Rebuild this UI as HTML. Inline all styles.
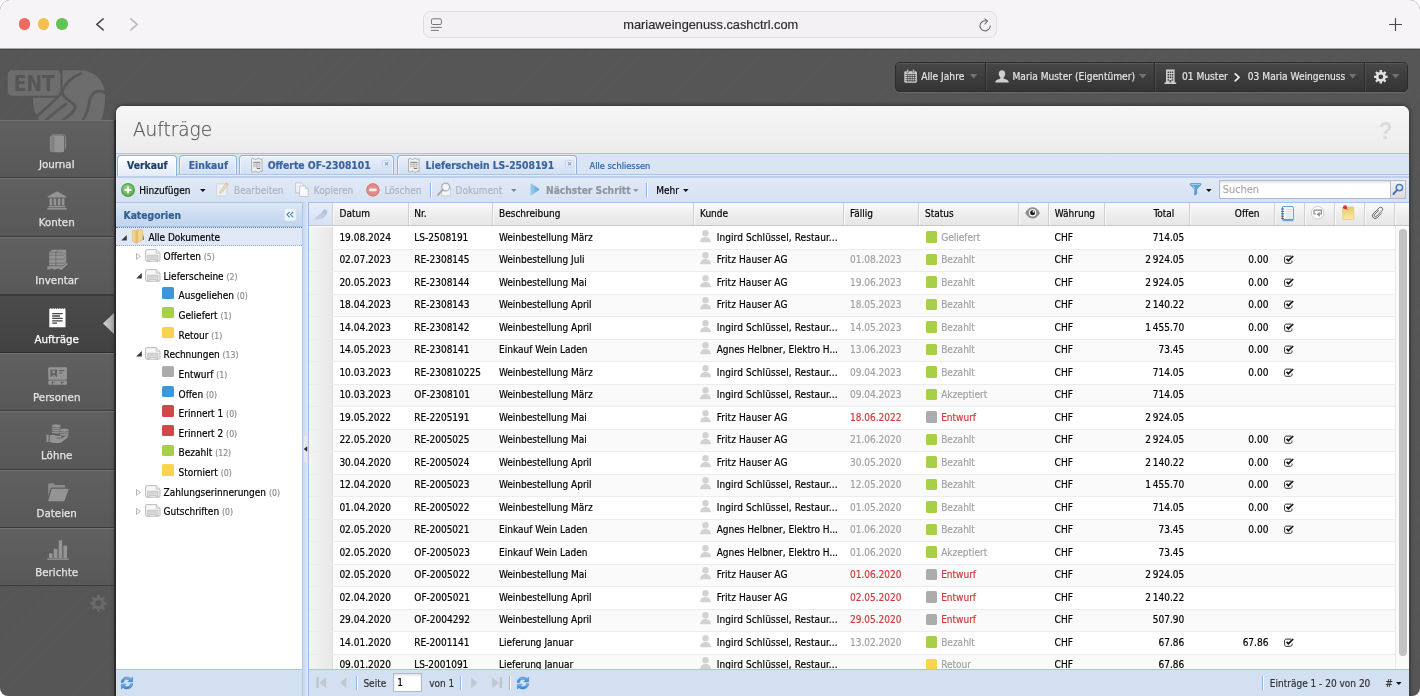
<!DOCTYPE html>
<html lang="de">
<head>
<meta charset="utf-8">
<title>Aufträge</title>
<style>
*{box-sizing:border-box;margin:0;padding:0}
html,body{width:1420px;height:696px;overflow:hidden;background:#fff}
body{font-family:"DejaVu Sans Condensed","Liberation Sans",sans-serif;font-size:10px;color:#000;position:relative;-webkit-text-stroke:0.18px}
.a{position:absolute;white-space:nowrap}
svg{position:absolute;overflow:visible}
#win{position:absolute;left:0;top:0;width:1420px;height:696px;border-radius:10px 10px 8px 8px;overflow:hidden;background:#f6f4f7;will-change:transform}
/* ---------- browser chrome ---------- */
#chrome{position:absolute;left:0;top:0;width:1420px;height:49px;background:#f6f4f7;border-bottom:1px solid #a9a7aa}
.tl{position:absolute;top:18.3px;width:11.4px;height:11.4px;border-radius:50%}
#url{position:absolute;left:422.5px;top:11px;width:574.6px;height:26.5px;border:1px solid #dfdde0;border-radius:7.5px;background:#f3f1f4}
#urltext{position:absolute;left:1px;width:100%;top:5px;text-align:center;font-family:"Liberation Sans",sans-serif;font-size:12.8px;color:#2c2c2e}
/* ---------- app background ---------- */
#app{position:absolute;left:0;top:0;width:1420px;height:696px;background:linear-gradient(#454545 50px,#565656 50px)}
#tex{position:absolute;left:0;top:0;width:1420px;height:696px;background:repeating-linear-gradient(135deg,rgba(255,255,255,.012) 0,rgba(255,255,255,.012) 1px,rgba(0,0,0,.016) 1px,rgba(0,0,0,.016) 3px)}
/* ---------- sidebar ---------- */
.sb{position:absolute;left:0;width:114.4px;height:58.25px;background:linear-gradient(#606060,#585858);border-top:1px solid #727272;border-bottom:1px solid #3c3c3c;color:#e4e4e4;-webkit-text-stroke:0.25px;text-align:center;font-family:"DejaVu Sans","Liberation Sans",sans-serif;font-size:10.3px}
.sb span{position:absolute;left:0;width:113.4px;top:36.9px}
.sb.act{background:linear-gradient(#4b4b4b,#424242);border-top-color:#3a3a3a;border-bottom-color:#2e2e2e;color:#fff}
/* ---------- top toolbar ---------- */
#tt{position:absolute;left:894.5px;top:62px;width:513.3px;height:30px;border-radius:5px;background:linear-gradient(#484848,#333);box-shadow:inset 0 0 0 1px #2d2d2d,inset 0 2px 0 rgba(255,255,255,.09),0 1px 0 rgba(255,255,255,.1)}
.tsep{position:absolute;top:63px;width:1px;height:28px;background:#2a2a2a;box-shadow:1px 0 0 rgba(255,255,255,.09)}
.tt{color:#e4e4e4;font-size:10.15px;top:71.1px}

/* ---------- main panel ---------- */
#panel{position:absolute;left:116px;top:106px;width:1293px;height:600px;border-radius:7px 7px 0 0;background:#fff;overflow:hidden;box-shadow:0 0 5px rgba(0,0,0,.6)}
#pin{position:absolute;left:-116px;top:-106px;width:1420px;height:696px}
#phead{position:absolute;left:116px;top:106px;width:1293px;height:47px;background:linear-gradient(#f6f6f6,#ececec)}
#ptitle{left:132.4px;top:116.9px;font-family:"DejaVu Sans","Liberation Sans",sans-serif;font-weight:200;font-size:20px;color:#555;transform-origin:0 0;transform:scaleX(0.922);-webkit-text-stroke:0.25px #666}
#help{left:1378.6px;top:117.5px;font-family:"Liberation Sans",sans-serif;font-weight:bold;font-size:23px;color:#dcdcdc;-webkit-text-stroke:0}
#tabbar{position:absolute;left:116px;top:153px;width:1293px;height:22px;background:#dae5f4;border-top:1px solid #a6c3ea}
#tabstrip{position:absolute;left:116px;top:174px;width:1293px;height:4px;background:#e4edf9;border-top:1px solid #a9c3ea;border-bottom:2px solid #bccfec}
.tab{position:absolute;top:155.3px;height:19px;box-shadow:inset 0 1px 0 rgba(255,255,255,.7),inset 1px 0 0 rgba(255,255,255,.5),inset -1px 0 0 rgba(255,255,255,.5);border:1px solid #8fb1e0;border-bottom:0;border-radius:4px 4px 0 0;background:linear-gradient(#e9f0fa,#d2e0f3);color:#3c639d;font-weight:bold;font-size:10.3px;white-space:nowrap}
.tab.act{background:linear-gradient(#fff,#e2ebf8);color:#1c3d66;height:20.3px}
.tab span{position:absolute;top:2.8px}
#tbar{position:absolute;left:116px;top:178px;width:1293px;height:24.5px;background:linear-gradient(#e1e9f6,#d5e1f1)}
.tb{top:185.2px;font-size:10px}
.dis{color:#adb4c0}
.vsep{position:absolute;width:1px;height:14px;background:#8fb4ea;box-shadow:1px 0 0 #fff}

.fld{position:absolute;border:1px solid #b4b9c9;background:#fff;box-shadow:inset 0 1.5px 2px rgba(0,0,0,.13)}
/* ---------- tree ---------- */
#treehd{position:absolute;left:116px;top:202px;width:186px;height:24.8px;background:linear-gradient(#dfe9f6,#cbdcf1 55%,#c0d4ed);border-top:1px solid #a6c3ea;border-bottom:1px solid #a6c3ea}
#treehd b{position:absolute;left:7.5px;top:5.8px;color:#2e5d97;font-size:10.25px}
.tr{position:absolute;left:116px;width:186px;height:19.65px;white-space:nowrap;font-size:10px}
.tr .lbl{position:absolute;top:4.5px}
.cnt{color:#8e8e8e;font-size:8.7px}
.sq{position:absolute;width:11.4px;height:11.4px;border-radius:1.5px}
.c-blue{background:#3e97db}.c-green{background:#a8cf48}.c-yellow{background:#f9d44f}.c-gray{background:#acacac}.c-red{background:#d04848}
#split{position:absolute;left:302px;top:202px;width:7px;height:500px;background:linear-gradient(90deg,#c6d7f0,#dfe8f6);border-left:1px solid #b3c9ea;border-right:1px solid #9dbbe6}
.foot{position:absolute;top:669px;height:30px;background:#d3e0f1;border-top:1px solid #a6c3ea}
/* ---------- grid ---------- */
#ghd{position:absolute;left:309px;top:202px;width:1100px;height:24px;background:linear-gradient(#fafafa,#ececec 60%,#e6e6e7);border-top:1px solid #a6c3ea;border-bottom:1px solid #c6c6c6}
.hc{position:absolute;top:203px;height:22px;width:2px;border-left:1px solid #cfcfcf;border-right:1px solid #fcfcfc}
.ht{top:208.3px;font-size:10px}
#rows{position:absolute;left:309px;top:226px;width:1086px;height:443px;overflow:hidden;background:#fff}
.row{position:absolute;left:0;width:1086px;height:22.5px;border-bottom:1px solid #ececec;background:#fff;white-space:nowrap;font-size:10px}
.row.alt{background:#fafafa}
.row .c{position:absolute;top:4.7px}
.row .num{position:absolute;left:0;top:0;width:24px;height:21.5px;background:linear-gradient(90deg,#f4f4f4,#e8e8e8);border-right:1px solid #dedede}
.row .r{text-align:right}
.grey{color:#a2a2a2}.red{color:#ce3b3b}
.ft{top:677.8px;font-size:10px;color:#333}
#vsb{position:absolute;left:1395px;top:226px;width:14px;height:443px;background:#fafafa;border-left:1px solid #e9e9e9}
#vsb i{position:absolute;left:3.4px;top:3.2px;width:7.2px;height:427px;border-radius:3.7px;background:#c2c2c2}
</style>
</head>
<body>
<div id="win">
<div id="app"><div id="tex"></div>
<svg style="left:0;top:0" width="120" height="119.6" viewBox="0 0 120 119.6"><g><rect x="7.8" y="70.2" width="52.6" height="25.6" rx="4.5" fill="#6d6d6d"/><text x="34.3" y="90.9" text-anchor="middle" font-family="DejaVu Sans,Liberation Sans,sans-serif" font-weight="bold" font-size="21" fill="#565656" textLength="41" lengthAdjust="spacingAndGlyphs">ENT</text><path d="M62.5 70.2 H79 C92 70.5 101 76 104.6 90 C105.5 98 105 110 101 121 H40 C35 115 32.6 106 33 97.8 H56 C60.5 97.8 62.5 95 62.5 91 Z" fill="#6d6d6d"/><path d="M81 73.5 C72 77 65 84 62 92 C58 98 46 108 34 119" fill="none" stroke="#585858" stroke-width="2.8" stroke-linecap="round"/><path d="M62 92 C64 100 72 101 75 106 C77 111 68 116 63 120" fill="none" stroke="#585858" stroke-width="2.8" stroke-linecap="round"/><path d="M66 104 C58 110 52 115 46 120" fill="none" stroke="#585858" stroke-width="2.8" stroke-linecap="round"/><path d="M104.5 92.5 C97 89 91 93 89.5 101 C88.5 108 87 114 83 120" fill="none" stroke="#585858" stroke-width="2.8" stroke-linecap="round"/></g></svg>
<div class="sb" style="top:120.00px"><svg style="left:48.5px;top:13.2px" width="18" height="19" viewBox="0 0 18 19" ><path d="M3 0.8 H14.6 C15.8 0.8 16.6 1.6 16.6 2.8 V14.6" fill="none" stroke="#949494" stroke-width="1" opacity=".8"/><rect x="1.2" y="1.6" width="14" height="16.6" rx="1.6" fill="#949494"/><rect x="2" y="2.4" width="3.6" height="15.8" fill="#545454" opacity=".28"/><path d="M0.6 4.2h1.2M0.6 6.7h1.2M0.6 9.2h1.2M0.6 11.7h1.2M0.6 14.2h1.2" stroke="#949494" stroke-width="0.9"/></svg><span>Journal</span></div>
<div class="sb" style="top:178.25px"><svg style="left:47.4px;top:11.6px" width="20" height="19" viewBox="0 0 20 19" ><path d="M10 0.2 L19.3 5.6 V6.6 H0.7 V5.6 Z" fill="#949494"/><path d="M2.6 7.6h2.6v6.6h-2.6zM6.6 7.6h2.6v6.6h-2.6zM10.8 7.6h2.6v6.6h-2.6zM14.8 7.6h2.6v6.6h-2.6z" fill="#949494"/><rect x="1.6" y="14.8" width="16.8" height="1.4" fill="#949494"/><rect x="0.3" y="16.8" width="19.4" height="1.8" fill="#949494"/></svg><span>Konten</span></div>
<div class="sb" style="top:236.50px"><svg style="left:46.6px;top:11.3px" width="21" height="21" viewBox="0 0 21 21" ><path d="M2.2 3.2 L5.2 0.8 H19.2 V13.6 L16.2 16.6 H2.2 Z" fill="#949494"/><path d="M2.2 3.3H16.2M2.2 6.1H16.2L19.2 3.6M2.2 10.2H16.2L19.2 7.7M2.2 14.3H16.2L19.2 11.8M8.8 3.2V16.6M8.8 3.2L11.6 0.9" stroke="#545454" stroke-width="0.6" fill="none" opacity=".75"/><path d="M0.4 17.3 H15.8 L20.4 13.2 V15.6 L15.8 19.8 V20.6 H12.8 L12 19.7 H9.6 L8.8 20.6 H6.6 L5.8 19.7 H3.4 L2.6 20.6 H0.4 Z" fill="#949494"/></svg><span>Inventar</span></div>
<div class="sb act" style="top:294.75px"><svg style="left:49px;top:11.0px" width="17" height="21" viewBox="0 0 17 21" ><path d="M0.3 2.2 L1.2 0.9 L2.1 2.2 L3 0.9 L3.9 2.2 L4.8 0.9 L5.7 2.2 L6.6 0.9 L7.5 2.2 L8.4 0.9 L9.3 2.2 L10.2 0.9 L11.1 2.2 L12 0.9 L12.9 2.2 L13.8 0.9 L14.7 2.2 L15.6 0.9 L16.5 2.2 V20.3 H0.3 Z" fill="#fff"/><path d="M3.2 6.6H13.6M3.2 9H11M3.2 11.4H13.6M3.2 13.8H13.6M3.2 16.2H8" stroke="#454545" stroke-width="1.3" fill="none"/></svg><span>Aufträge</span></div>
<div class="sb" style="top:353.00px"><svg style="left:47.9px;top:12.5px" width="19.2" height="18" viewBox="0 0 19.2 18" ><rect x="0.3" y="0.3" width="18.6" height="12.4" rx="1" fill="#949494"/><rect x="2.4" y="2.6" width="6.6" height="7.2" fill="#545454" opacity=".8"/><circle cx="5.7" cy="5" r="1.4" fill="#949494"/><path d="M3.3 9.8C3.3 7.6 8.1 7.6 8.1 9.8Z" fill="#949494"/><path d="M10.8 3.6H16.4M10.8 6H14.6" stroke="#545454" stroke-width="1.1" opacity=".8"/><rect x="0.3" y="13.6" width="18.6" height="4.2" rx="0.8" fill="#949494"/><path d="M3.4 15.2h3.4M12.4 15.2h3.4" stroke="#545454" stroke-width="1.1" opacity=".8"/><path d="M4.4 15.4v2M13.6 15.4v2" stroke="#545454" stroke-width="1" opacity=".8"/></svg><span>Personen</span></div>
<div class="sb" style="top:411.25px"><svg style="left:45.8px;top:11.6px" width="24" height="20" viewBox="0 0 24 20" ><ellipse cx="10.3" cy="8.3" rx="4.7" ry="1.6" fill="#949494" stroke="#545454" stroke-width="0.45"/><ellipse cx="10.3" cy="6.2" rx="4.7" ry="1.6" fill="#949494" stroke="#545454" stroke-width="0.45"/><ellipse cx="10.3" cy="4.1" rx="4.7" ry="1.6" fill="#949494" stroke="#545454" stroke-width="0.45"/><ellipse cx="10.3" cy="2.0" rx="4.7" ry="1.9" fill="#949494" stroke="#545454" stroke-width="0.45"/><ellipse cx="18.3" cy="10.4" rx="4.6" ry="1.6" fill="#949494" stroke="#545454" stroke-width="0.45"/><ellipse cx="18.3" cy="8.3" rx="4.6" ry="1.6" fill="#949494" stroke="#545454" stroke-width="0.45"/><ellipse cx="18.3" cy="6.2" rx="4.6" ry="1.9" fill="#949494" stroke="#545454" stroke-width="0.45"/><rect x="0.4" y="10.6" width="2.2" height="7.4" fill="#949494"/><path d="M3.6 11.4 C6 10.4 8 10.6 10 11.8 H14.6 C16 11.8 16 13.8 14.6 13.8 H10.4 L10.4 14.4 H15.4 L20.2 11.6 C21.8 10.8 22.8 12.4 21.6 13.4 L15.6 18.2 C14.8 18.8 14 19 13 19 H7.4 C6 19 5.2 18.2 3.6 18 Z" fill="#949494"/></svg><span>Löhne</span></div>
<div class="sb" style="top:469.50px"><svg style="left:47px;top:12.4px" width="22" height="19" viewBox="0 0 22 19" ><path d="M1.2 1.2 C1.2 0.6 1.6 0.3 2.2 0.3 H6.4 L8 2 H17 C17.8 2 18.2 2.4 18.2 3.2 V4.6 H5.4 C4.4 4.6 3.8 5 3.4 6 L1.2 13 Z" fill="#949494" opacity=".85"/><path d="M5.6 5.8 H20.6 C21.4 5.8 21.7 6.3 21.4 7 L17.8 17 C17.5 17.8 17 18.2 16.2 18.2 H1 L4.4 7 C4.7 6.2 5 5.8 5.6 5.8 Z" fill="#949494"/></svg><span>Dateien</span></div>
<div class="sb" style="top:527.75px"><svg style="left:46.6px;top:11.1px" width="22" height="20" viewBox="0 0 22 20" ><rect x="2" y="13.4" width="3.6" height="4.6" fill="#949494"/><rect x="6.8" y="8.8" width="3.6" height="9.2" fill="#949494"/><rect x="11.6" y="0.4" width="3.6" height="17.6" fill="#949494"/><rect x="16.4" y="5.6" width="3.6" height="12.4" fill="#949494"/><rect x="0.2" y="18.4" width="21.4" height="1.4" fill="#949494"/></svg><span>Berichte</span></div>
<div class="a" style="left:114.4px;top:120.0px;width:1.6px;height:600px;background:#383838"></div><svg style="left:103.4px;top:312.7px" width="11" height="21" viewBox="0 0 11 21" ><defs><linearGradient id="sag" x1="0" x2="1"><stop offset="0" stop-color="#d4d4d4"/><stop offset="1" stop-color="#a9a9a9"/></linearGradient></defs><path d="M11 0 L0 10.5 L11 21 Z" fill="url(#sag)"/></svg><svg style="left:89.6px;top:595.4px" width="17" height="17" viewBox="0 0 17 17" ><path d="M16.58 6.87 L16.58 9.73 L14.33 9.72 L13.60 11.49 L15.19 13.07 L13.17 15.09 L11.59 13.50 L9.82 14.23 L9.83 16.48 L6.97 16.48 L6.98 14.23 L5.21 13.50 L3.63 15.09 L1.61 13.07 L3.20 11.49 L2.47 9.72 L0.22 9.73 L0.22 6.87 L2.47 6.88 L3.20 5.11 L1.61 3.53 L3.63 1.51 L5.21 3.10 L6.98 2.37 L6.97 0.12 L9.83 0.12 L9.82 2.37 L11.59 3.10 L13.17 1.51 L15.19 3.53 L13.60 5.11 L14.33 6.88 Z M11.40 8.30 A3.0 3.0 0 1 0 5.40 8.30 A3.0 3.0 0 1 0 11.40 8.30 Z" fill="#696969" fill-rule="evenodd"/></svg>
<div id="tt"></div><svg style="left:904.2px;top:69.3px" width="13.2" height="14" viewBox="0 0 13.2 14" ><rect x="0.3" y="2.2" width="12.6" height="11.6" rx="1.2" fill="#cfcfcf"/><rect x="2.8" y="0.3" width="1.7" height="3.4" rx="0.6" fill="#cfcfcf" stroke="#3e3e3e" stroke-width="0.5"/><rect x="8.7" y="0.3" width="1.7" height="3.4" rx="0.6" fill="#cfcfcf" stroke="#3e3e3e" stroke-width="0.5"/><path d="M1.4 5.4H11.8M1.4 7.5H11.8M1.4 9.6H11.8M1.4 11.7H11.8M3.7 5.4V13M6 5.4V13M8.3 5.4V13M10.6 5.4V13" stroke="#3e3e3e" stroke-width="0.7" fill="none"/></svg><div class="a tt" style="left:921.3px;">Alle Jahre</div><svg style="left:969.7px;top:74.2px" width="7.4" height="4.6" viewBox="0 0 7.4 4.6"><path d="M0 0H7.4L3.7 4.6Z" fill="#737373"/></svg><div class="tsep" style="left:984.7px"></div><svg style="left:995px;top:70.2px" width="14" height="12.6" viewBox="0 0 14 12.6" ><path d="M7 0.3 C9.2 0.3 10.2 2 10.2 3.8 C10.2 5.6 9.4 6.8 8.6 7.4 C8.4 8.4 9.2 8.8 10.6 9.3 C12.6 10 13.6 10.6 13.8 12.4 H0.2 C0.4 10.6 1.4 10 3.4 9.3 C4.8 8.8 5.6 8.4 5.4 7.4 C4.6 6.8 3.8 5.6 3.8 3.8 C3.8 2 4.8 0.3 7 0.3 Z" fill="#cfcfcf"/></svg><div class="a tt" style="left:1012.5px;">Maria Muster (Eigentümer)</div><svg style="left:1138.7px;top:74.2px" width="7.4" height="4.6" viewBox="0 0 7.4 4.6"><path d="M0 0H7.4L3.7 4.6Z" fill="#737373"/></svg><div class="tsep" style="left:1153.8px"></div><svg style="left:1164.2px;top:69px" width="12.6" height="15.2" viewBox="0 0 12.6 15.2" ><path d="M2 0.4 H10.6 V13.4 H12.2 V15 H0.4 V13.4 H2 Z" fill="#cfcfcf"/><path d="M3.6 2.4h1.4v1.6h-1.4zM5.7 2.4h1.4v1.6h-1.4zM7.8 2.4h1.4v1.6h-1.4zM3.6 5h1.4v1.6h-1.4zM5.7 5h1.4v1.6h-1.4zM7.8 5h1.4v1.6h-1.4zM3.6 7.6h1.4v1.6h-1.4zM5.7 7.6h1.4v1.6h-1.4zM7.8 7.6h1.4v1.6h-1.4zM3.6 10.2h1.4v1.6h-1.4zM7.8 10.2h1.4v1.6h-1.4zM5.6 11h1.6v2.4h-1.6z" fill="#3e3e3e"/></svg><div class="a tt" style="left:1182px;">01 Muster</div><svg style="left:1234px;top:72.6px" width="7" height="9" viewBox="0 0 7 9" ><path d="M1.2 0.9 L5 4.4 L1.2 7.9" fill="none" stroke="#f0f0f0" stroke-width="1.7" stroke-linecap="round" stroke-linejoin="round"/></svg><div class="a tt" style="left:1247.8px;">03 Maria Weingenuss</div><svg style="left:1348.7px;top:74.2px" width="7.4" height="4.6" viewBox="0 0 7.4 4.6"><path d="M0 0H7.4L3.7 4.6Z" fill="#737373"/></svg><div class="tsep" style="left:1364px"></div><svg style="left:1374.2px;top:69.8px" width="14" height="14" viewBox="0 0 14 14" ><path d="M13.60 5.61 L13.60 7.99 L11.66 7.97 L11.06 9.41 L12.45 10.77 L10.77 12.45 L9.41 11.06 L7.97 11.66 L7.99 13.60 L5.61 13.60 L5.63 11.66 L4.19 11.06 L2.83 12.45 L1.15 10.77 L2.54 9.41 L1.94 7.97 L0.00 7.99 L0.00 5.61 L1.94 5.63 L2.54 4.19 L1.15 2.83 L2.83 1.15 L4.19 2.54 L5.63 1.94 L5.61 0.00 L7.99 0.00 L7.97 1.94 L9.41 2.54 L10.77 1.15 L12.45 2.83 L11.06 4.19 L11.66 5.63 Z M9.20 6.80 A2.4 2.4 0 1 0 4.40 6.80 A2.4 2.4 0 1 0 9.20 6.80 Z" fill="#e2e2e2" fill-rule="evenodd"/></svg><svg style="left:1391.7px;top:74.2px" width="7.4" height="4.6" viewBox="0 0 7.4 4.6"><path d="M0 0H7.4L3.7 4.6Z" fill="#737373"/></svg>
<div id="panel"><div id="pin">
<div id="phead"></div><div class="a" id="ptitle" style="left:133px;">Aufträge</div><div class="a" id="help" style="left:1378.5px;">?</div>
<div id="tabbar"></div><div id="tabstrip"></div>
<div class="tab act" style="left:117.2px;width:59.6px"><span style="left:8.9px">Verkauf</span></div><div class="tab" style="left:179.2px;width:57.6px"><span style="left:8.6px">Einkauf</span></div><div class="tab" style="left:239.4px;width:155.0px"><span style="left:27.3px">Offerte OF-2308101</span></div><svg style="left:250.6px;top:158.2px" width="11.6" height="14.7" viewBox="0 0 11.6 14.7" ><path d="M0.5 1 Q1.8 -0.3 3.1 1 Q4.4 2 5.8 1 Q7.1 -0.3 8.5 1 Q9.8 2 11.1 0.8 V13.7 Q9.8 12.5 8.5 13.7 Q7.1 14.9 5.8 13.7 Q4.4 12.5 3.1 13.7 Q1.8 14.9 0.5 13.7 Z" fill="#eeeeee" stroke="#a5a5a5" stroke-width="0.8"/><path d="M2.6 4.4H9.2" stroke="#6d6d6d" stroke-width="0.9"/><path d="M2.8 4.4V9.4M5.9 4.4V10.6M9 4.4V9.4M2.8 6.4H9M2.8 8.2H9" stroke="#9a9a9a" stroke-width="0.55" fill="none"/><path d="M6 10.4H9.2" stroke="#6a6a6a" stroke-width="1"/></svg><svg style="left:381.8px;top:159.5px" width="9.2" height="7.6" viewBox="0 0 9.2 7.6" ><rect x="0.4" y="0.4" width="8.4" height="6.8" rx="1.2" fill="#e7eefa" stroke="#b9cdea" stroke-width="0.7"/><path d="M2.9 2.2L6.3 5.4M6.3 2.2L2.9 5.4" stroke="#8aa6cf" stroke-width="1.2"/></svg><div class="tab" style="left:397.3px;width:179.5px"><span style="left:27.3px">Lieferschein LS-2508191</span></div><svg style="left:408.1px;top:158.2px" width="11.6" height="14.7" viewBox="0 0 11.6 14.7" ><path d="M0.5 1 Q1.8 -0.3 3.1 1 Q4.4 2 5.8 1 Q7.1 -0.3 8.5 1 Q9.8 2 11.1 0.8 V13.7 Q9.8 12.5 8.5 13.7 Q7.1 14.9 5.8 13.7 Q4.4 12.5 3.1 13.7 Q1.8 14.9 0.5 13.7 Z" fill="#eeeeee" stroke="#a5a5a5" stroke-width="0.8"/><path d="M2.6 4.4H9.2" stroke="#6d6d6d" stroke-width="0.9"/><path d="M2.8 4.4V9.4M5.9 4.4V10.6M9 4.4V9.4M2.8 6.4H9M2.8 8.2H9" stroke="#9a9a9a" stroke-width="0.55" fill="none"/><path d="M6 10.4H9.2" stroke="#6a6a6a" stroke-width="1"/></svg><svg style="left:564.7px;top:159.5px" width="9.2" height="7.6" viewBox="0 0 9.2 7.6" ><rect x="0.4" y="0.4" width="8.4" height="6.8" rx="1.2" fill="#e7eefa" stroke="#b9cdea" stroke-width="0.7"/><path d="M2.9 2.2L6.3 5.4M6.3 2.2L2.9 5.4" stroke="#8aa6cf" stroke-width="1.2"/></svg><div class="a" style="left:589.6px;top:160.3px;font-size:9.2px;color:#2e5d9f">Alle schliessen</div>
<div id="tbar"></div><svg style="left:120.8px;top:182.7px" width="14" height="14" viewBox="0 0 14 14" ><defs><radialGradient id="ga" cx=".4" cy=".3" r=".8"><stop offset="0" stop-color="#93d485"/><stop offset="1" stop-color="#52a847"/></radialGradient></defs><circle cx="7" cy="7" r="6.4" fill="url(#ga)" stroke="#52a048" stroke-width="1.1"/><path d="M7 3.6V10.4M3.6 7H10.4" stroke="#fff" stroke-width="1.8"/></svg><div class="a tb" style="left:139.3px;">Hinzufügen</div><svg style="left:199.9px;top:188.6px" width="5.6" height="3.1" viewBox="0 0 5.6 3.1"><path d="M0 0H5.6L2.8 3.1Z" fill="#111"/></svg><svg style="left:216.2px;top:182.3px" width="13" height="15" viewBox="0 0 13 15" opacity=".8"><rect x="0.6" y="2" width="10.2" height="12" rx="0.8" fill="#f4f5f7" stroke="#c3c8d0" stroke-width="0.8"/><path d="M10.4 0.6 L12.4 2.4 L6 10.4 L3.6 11.4 L4.2 8.8 Z" fill="#ecd9ad" stroke="#c9b78e" stroke-width="0.6"/><path d="M10.4 0.6 L12.4 2.4 L11.4 3.6 L9.4 1.8Z" fill="#e4b0a8"/></svg><div class="a tb dis" style="left:234px;">Bearbeiten</div><svg style="left:295.2px;top:182.4px" width="14" height="15" viewBox="0 0 14 15" ><path d="M0.6 0.8 H6.4 L8.8 3.2 V10.8 H0.6 Z" fill="#f2f3f5" stroke="#b9bec7" stroke-width="0.8"/><path d="M4.6 3.8 H10.4 L13.2 6.6 V14.4 H4.6 Z" fill="#fafafb" stroke="#b9bec7" stroke-width="0.8"/><path d="M10.4 3.8V6.6H13.2" fill="none" stroke="#b9bec7" stroke-width="0.7"/></svg><div class="a tb dis" style="left:313.8px;">Kopieren</div><svg style="left:366px;top:182.8px" width="14" height="14" viewBox="0 0 14 14" ><circle cx="6.9" cy="6.9" r="6.6" fill="#e58a8a"/><circle cx="6.9" cy="6.9" r="6.1" fill="none" stroke="#dc7575" stroke-width="0.9"/><rect x="3.2" y="5.6" width="7.4" height="2.6" rx="0.6" fill="#fbeeee"/></svg><div class="a tb dis" style="left:384.5px;">Löschen</div><div class="vsep" style="left:430px;top:183px"></div><svg style="left:436.8px;top:182.2px" width="14" height="15" viewBox="0 0 14 15" ><path d="M4.6 2.6 H11 L13.4 5 V13.8 H4.6 Z" fill="#f4f5f7" stroke="#c3c8d0" stroke-width="0.8"/><circle cx="8.6" cy="5" r="3.9" fill="#f3f6fa" fill-opacity=".8" stroke="#a9aeb6" stroke-width="1.1"/><path d="M5.8 7.8 L1 12.8" stroke="#a3a8b0" stroke-width="1.9" stroke-linecap="round"/></svg><div class="a tb dis" style="left:455.6px;">Dokument</div><svg style="left:511.4px;top:188.6px" width="5.6" height="3.1" viewBox="0 0 5.6 3.1"><path d="M0 0H5.6L2.8 3.1Z" fill="#7d8794"/></svg><svg style="left:530.3px;top:183px" width="9.2" height="12.9" viewBox="0 0 9.2 12.9" ><defs><linearGradient id="gn" x1="0" x2="1"><stop offset="0" stop-color="#9fd0f0"/><stop offset="1" stop-color="#5aa7dd"/></linearGradient></defs><path d="M1.4 0.5 C0.8 0.2 0.4 0.5 0.4 1.1 V11.7 C0.4 12.3 0.8 12.6 1.4 12.3 L8.6 7.3 C9.1 6.9 9.1 6 8.6 5.6 Z" fill="url(#gn)"/></svg><div class="a tb" style="left:546px;font-weight:bold;color:#8f949c;top:185.2px;font-size:10.2px">Nächster Schritt</div><svg style="left:633.4px;top:188.8px" width="5.6" height="3.1" viewBox="0 0 5.6 3.1"><path d="M0 0H5.6L2.8 3.1Z" fill="#8f949c"/></svg><div class="vsep" style="left:646px;top:183px"></div><div class="a tb" style="left:656.2px;">Mehr</div><svg style="left:683.2px;top:188.6px" width="5.6" height="3.1" viewBox="0 0 5.6 3.1"><path d="M0 0H5.6L2.8 3.1Z" fill="#111"/></svg><svg style="left:1189.6px;top:183.2px" width="11.8" height="12.6" viewBox="0 0 11.8 12.6" ><path d="M0.4 0.6 H10.8 V1.9 L6.7 6.2 V11 L4.7 12.2 V6.2 L0.4 1.9 Z" fill="#5aa5de" stroke="#3f86c4" stroke-width="0.6" stroke-linejoin="round"/><path d="M1.2 1.5H10" stroke="#b4d9f4" stroke-width="0.8"/><path d="M2.6 2.8L4.9 5.2" stroke="#cfe6f8" stroke-width="0.8"/></svg><svg style="left:1206.4px;top:188.6px" width="5.6" height="3.1" viewBox="0 0 5.6 3.1"><path d="M0 0H5.6L2.8 3.1Z" fill="#111"/></svg><div class="fld" style="left:1219.3px;top:180px;width:187.2px;height:19px"></div><div class="a" style="left:1222.8px;top:182.7px;font-size:10.9px;color:#a9a9a9">Suchen</div><div class="a" style="left:1390px;top:181px;width:15px;height:17px;background:linear-gradient(#f3f3f4,#dcdcde);border-left:1px solid #b9bccb"></div><svg style="left:1392.2px;top:183.3px" width="12" height="12" viewBox="0 0 12 12" ><circle cx="7.4" cy="4.6" r="3.2" fill="#e4e6ea" stroke="#4a7fc4" stroke-width="1.5"/><path d="M5 7.2 L1.4 11" stroke="#3f70b8" stroke-width="1.9" stroke-linecap="round"/></svg>
<div id="treehd"><b>Kategorien</b></div><svg style="left:283.7px;top:208px" width="12.4" height="13.2" viewBox="0 0 12.4 13.2" ><rect x="0.3" y="0.3" width="11.8" height="12.6" rx="2" fill="#f0f5fc" stroke="#cad9ef" stroke-width="0.6"/><path d="M5.6 3.9 L3 6.6 L5.6 9.3 M9.2 3.9 L6.6 6.6 L9.2 9.3" fill="none" stroke="#4c86c6" stroke-width="1.2"/></svg>
<div class="tr" style="top:226.80px;background:#e0e8f6;border-top:1px dotted #6a7488;border-bottom:1px dotted #8fa9d8"><svg style="left:5.3px;top:7.3px" width="6" height="5.6" viewBox="0 0 6 5.6" ><path d="M5.8 0 V5.4 H0.2 Z" fill="#3a3a3a"/></svg><svg style="left:16.2px;top:1.6px" width="12.4" height="14.8" viewBox="0 0 12.4 14.8" ><defs><linearGradient id="gf" x1="0" x2="1"><stop offset="0" stop-color="#f6dc9c"/><stop offset="1" stop-color="#e4b869"/></linearGradient></defs><rect x="10.2" y="6.2" width="1.8" height="2" fill="#f0a23c"/><rect x="10.2" y="8" width="1.8" height="3" fill="#3d93df"/><path d="M4.6 0.7 L9.6 0.4 C10.2 0.4 10.6 0.8 10.6 1.4 V11.2 L6 13 Z" fill="#f2d48f" stroke="#ddb469" stroke-width="0.5"/><path d="M0.5 1.8 C0.5 1.2 0.9 0.9 1.4 1 L5.4 2.4 V14.4 L1.2 12.8 C0.7 12.6 0.5 12.3 0.5 11.8 Z" fill="url(#gf)" stroke="#d7aa5c" stroke-width="0.5"/></svg><div class="lbl" style="left:32.4px">Alle Dokumente</div></div>
<div class="tr" style="top:246.45px"><svg style="left:20px;top:6.5px" width="5" height="6.8" viewBox="0 0 5 6.8" ><path d="M0.5 0.5 L4.4 3.4 L0.5 6.3 Z" fill="#fff" stroke="#a3a3a3" stroke-width="0.8"/></svg><svg style="left:29.4px;top:2.6px" width="15.6" height="12.8" viewBox="0 0 15.6 12.8" ><path d="M2 0.6 H11.2 L15 4.2 V11 C15 11.8 14.6 12.2 13.8 12.2 H2 C1.2 12.2 0.6 11.8 0.6 11 V2 C0.6 1.2 1.2 0.6 2 0.6 Z" fill="#f7f7f7" stroke="#b3b3b3" stroke-width="0.9"/><path d="M11.2 0.6 V4.2 H15" fill="#e9e9e9" stroke="#b9b9b9" stroke-width="0.7"/><path d="M2.6 6.2 H13 V12 H11 V10.4 H4.6 V12 H2.6 Z" fill="#dcdcdc" stroke="#b7b7b7" stroke-width="0.7"/><path d="M4 8 H11.6" stroke="#c9c9c9" stroke-width="0.8"/></svg><div class="lbl" style="left:47.6px">Offerten <span class="cnt">(5)</span></div></div>
<div class="tr" style="top:266.10px"><svg style="left:20.1px;top:6.6px" width="6" height="5.6" viewBox="0 0 6 5.6" ><path d="M5.8 0 V5.4 H0.2 Z" fill="#3a3a3a"/></svg><svg style="left:29.4px;top:2.6px" width="15.6" height="12.8" viewBox="0 0 15.6 12.8" ><path d="M2 0.6 H11.2 L15 4.2 V11 C15 11.8 14.6 12.2 13.8 12.2 H2 C1.2 12.2 0.6 11.8 0.6 11 V2 C0.6 1.2 1.2 0.6 2 0.6 Z" fill="#f7f7f7" stroke="#b3b3b3" stroke-width="0.9"/><path d="M11.2 0.6 V4.2 H15" fill="#e9e9e9" stroke="#b9b9b9" stroke-width="0.7"/><path d="M2.6 6.2 H13 V12 H11 V10.4 H4.6 V12 H2.6 Z" fill="#dcdcdc" stroke="#b7b7b7" stroke-width="0.7"/><path d="M4 8 H11.6" stroke="#c9c9c9" stroke-width="0.8"/></svg><div class="lbl" style="left:47.6px">Lieferscheine <span class="cnt">(2)</span></div></div>
<div class="tr" style="top:285.75px"><div class="sq c-blue" style="left:46.4px;top:1.6px"></div><div class="lbl" style="left:62.6px">Ausgeliehen <span class="cnt">(0)</span></div></div>
<div class="tr" style="top:305.40px"><div class="sq c-green" style="left:46.4px;top:1.6px"></div><div class="lbl" style="left:62.6px">Geliefert <span class="cnt">(1)</span></div></div>
<div class="tr" style="top:325.05px"><div class="sq c-yellow" style="left:46.4px;top:1.6px"></div><div class="lbl" style="left:62.6px">Retour <span class="cnt">(1)</span></div></div>
<div class="tr" style="top:344.70px"><svg style="left:20.1px;top:6.6px" width="6" height="5.6" viewBox="0 0 6 5.6" ><path d="M5.8 0 V5.4 H0.2 Z" fill="#3a3a3a"/></svg><svg style="left:29.4px;top:2.6px" width="15.6" height="12.8" viewBox="0 0 15.6 12.8" ><path d="M2 0.6 H11.2 L15 4.2 V11 C15 11.8 14.6 12.2 13.8 12.2 H2 C1.2 12.2 0.6 11.8 0.6 11 V2 C0.6 1.2 1.2 0.6 2 0.6 Z" fill="#f7f7f7" stroke="#b3b3b3" stroke-width="0.9"/><path d="M11.2 0.6 V4.2 H15" fill="#e9e9e9" stroke="#b9b9b9" stroke-width="0.7"/><path d="M2.6 6.2 H13 V12 H11 V10.4 H4.6 V12 H2.6 Z" fill="#dcdcdc" stroke="#b7b7b7" stroke-width="0.7"/><path d="M4 8 H11.6" stroke="#c9c9c9" stroke-width="0.8"/></svg><div class="lbl" style="left:47.6px">Rechnungen <span class="cnt">(13)</span></div></div>
<div class="tr" style="top:364.35px"><div class="sq c-gray" style="left:46.4px;top:1.6px"></div><div class="lbl" style="left:62.6px">Entwurf <span class="cnt">(1)</span></div></div>
<div class="tr" style="top:384.00px"><div class="sq c-blue" style="left:46.4px;top:1.6px"></div><div class="lbl" style="left:62.6px">Offen <span class="cnt">(0)</span></div></div>
<div class="tr" style="top:403.65px"><div class="sq c-red" style="left:46.4px;top:1.6px"></div><div class="lbl" style="left:62.6px">Erinnert 1 <span class="cnt">(0)</span></div></div>
<div class="tr" style="top:423.30px"><div class="sq c-red" style="left:46.4px;top:1.6px"></div><div class="lbl" style="left:62.6px">Erinnert 2 <span class="cnt">(0)</span></div></div>
<div class="tr" style="top:442.95px"><div class="sq c-green" style="left:46.4px;top:1.6px"></div><div class="lbl" style="left:62.6px">Bezahlt <span class="cnt">(12)</span></div></div>
<div class="tr" style="top:462.60px"><div class="sq c-yellow" style="left:46.4px;top:1.6px"></div><div class="lbl" style="left:62.6px">Storniert <span class="cnt">(0)</span></div></div>
<div class="tr" style="top:482.25px"><svg style="left:20px;top:6.5px" width="5" height="6.8" viewBox="0 0 5 6.8" ><path d="M0.5 0.5 L4.4 3.4 L0.5 6.3 Z" fill="#fff" stroke="#a3a3a3" stroke-width="0.8"/></svg><svg style="left:29.4px;top:2.6px" width="15.6" height="12.8" viewBox="0 0 15.6 12.8" ><path d="M2 0.6 H11.2 L15 4.2 V11 C15 11.8 14.6 12.2 13.8 12.2 H2 C1.2 12.2 0.6 11.8 0.6 11 V2 C0.6 1.2 1.2 0.6 2 0.6 Z" fill="#f7f7f7" stroke="#b3b3b3" stroke-width="0.9"/><path d="M11.2 0.6 V4.2 H15" fill="#e9e9e9" stroke="#b9b9b9" stroke-width="0.7"/><path d="M2.6 6.2 H13 V12 H11 V10.4 H4.6 V12 H2.6 Z" fill="#dcdcdc" stroke="#b7b7b7" stroke-width="0.7"/><path d="M4 8 H11.6" stroke="#c9c9c9" stroke-width="0.8"/></svg><div class="lbl" style="left:47.6px">Zahlungserinnerungen <span class="cnt">(0)</span></div></div>
<div class="tr" style="top:501.90px"><svg style="left:20px;top:6.5px" width="5" height="6.8" viewBox="0 0 5 6.8" ><path d="M0.5 0.5 L4.4 3.4 L0.5 6.3 Z" fill="#fff" stroke="#a3a3a3" stroke-width="0.8"/></svg><svg style="left:29.4px;top:2.6px" width="15.6" height="12.8" viewBox="0 0 15.6 12.8" ><path d="M2 0.6 H11.2 L15 4.2 V11 C15 11.8 14.6 12.2 13.8 12.2 H2 C1.2 12.2 0.6 11.8 0.6 11 V2 C0.6 1.2 1.2 0.6 2 0.6 Z" fill="#f7f7f7" stroke="#b3b3b3" stroke-width="0.9"/><path d="M11.2 0.6 V4.2 H15" fill="#e9e9e9" stroke="#b9b9b9" stroke-width="0.7"/><path d="M2.6 6.2 H13 V12 H11 V10.4 H4.6 V12 H2.6 Z" fill="#dcdcdc" stroke="#b7b7b7" stroke-width="0.7"/><path d="M4 8 H11.6" stroke="#c9c9c9" stroke-width="0.8"/></svg><div class="lbl" style="left:47.6px">Gutschriften <span class="cnt">(0)</span></div></div>
<div id="split"></div><svg style="left:303.2px;top:432.9px" width="5.2" height="32" viewBox="0 0 5.2 32" ><path d="M5 0.3 L0.4 3.6 V28.4 L5 31.7 Z" fill="#e7e8ea" stroke="#cfd4dc" stroke-width="0.6"/><path d="M4.2 13.3 V18.7 L0.8 16 Z" fill="#2e2e2e"/></svg><div class="foot" style="left:116px;width:186px"></div><svg style="left:120.3px;top:675.8px" width="14" height="14" viewBox="0 0 14 14" ><defs><linearGradient id="gr" x1="0" y1="0" x2="0" y2="1"><stop offset="0" stop-color="#7dbcf0"/><stop offset="1" stop-color="#2f7fd0"/></linearGradient></defs><path d="M1.2 6.4 C1.4 3 4 1 7 1 C8.6 1 10 1.6 11 2.6 L12.6 1 V5.8 H7.8 L9.4 4.2 C8.8 3.6 8 3.2 7 3.2 C5.2 3.2 3.8 4.4 3.4 6.4 Z" fill="url(#gr)" stroke="#2a6fb8" stroke-width="0.4"/><path d="M12.8 7.6 C12.6 11 10 13 7 13 C5.4 13 4 12.4 3 11.4 L1.4 13 V8.2 H6.2 L4.6 9.8 C5.2 10.4 6 10.8 7 10.8 C8.8 10.8 10.2 9.6 10.6 7.6 Z" fill="url(#gr)" stroke="#2a6fb8" stroke-width="0.4"/></svg>
<div id="ghd"></div><div class="a" style="left:309px;top:203px;width:23.7px;height:22px;background:linear-gradient(#e6eefa,#d5e1f4)"></div><svg style="left:313.9px;top:208.7px" width="14.4" height="10.6" viewBox="0 0 14.4 10.6" ><path d="M9.4 1.2 C10 0.2 11.6 0 12.4 0.8 C12.9 1.3 13 1.9 13 2.4 L14.2 3 L13 3.3 C12.8 5.6 11.6 7 9.8 8.2 C8.4 9.2 6.6 9.6 5.4 10 L0.2 10.4 L5.6 5.6 C7.2 4.2 8.6 2.6 9.4 1.2 Z" fill="#b2c2db"/><path d="M1.6 10L8.6 4.6M3.4 10.1L10 5.2M5.6 9.8L11 5.8" stroke="#dce6f5" stroke-width="0.55" fill="none"/></svg><div class="hc" style="left:332.2px"></div><div class="hc" style="left:407.9px"></div><div class="hc" style="left:491.7px"></div><div class="hc" style="left:692.8px"></div><div class="hc" style="left:843.4px"></div><div class="hc" style="left:918.4px"></div><div class="hc" style="left:1017.9px"></div><div class="hc" style="left:1047.9px"></div><div class="hc" style="left:1104.2px"></div><div class="hc" style="left:1188.7px"></div><div class="hc" style="left:1273.7px"></div><div class="hc" style="left:1303.7px"></div><div class="hc" style="left:1333.6px"></div><div class="hc" style="left:1363.6px"></div><div class="hc" style="left:1393.7px"></div><div class="a ht" style="left:339.5px;">Datum</div><div class="a ht" style="left:414.3px;">Nr.</div><div class="a ht" style="left:499px;">Beschreibung</div><div class="a ht" style="left:700px;">Kunde</div><div class="a ht" style="left:850px;">Fällig</div><div class="a ht" style="left:925px;">Status</div><div class="a ht" style="left:1054.8px;">Währung</div><div class="a ht" style="left:1104.7px;width:69.7px;text-align:right">Total</div><div class="a ht" style="left:1189px;width:70.4px;text-align:right">Offen</div><svg style="left:1024.7px;top:207.1px" width="15.2" height="11.8" viewBox="0 0 15.2 11.8" ><path d="M0.2 5.9 C2.4 2 5 0.3 7.6 0.3 C10.2 0.3 12.8 2 15 5.9 C12.8 9.8 10.2 11.5 7.6 11.5 C5 11.5 2.4 9.8 0.2 5.9 Z" fill="#8d8d8d"/><circle cx="7.6" cy="5.7" r="3.7" fill="#fff"/><circle cx="7.6" cy="5.7" r="2.5" fill="#1c1c1c"/><circle cx="8.5" cy="4.7" r="0.9" fill="#fff"/></svg><svg style="left:1281.2px;top:205.7px" width="13" height="15.2" viewBox="0 0 13 15.2" ><rect x="1.4" y="0.5" width="11" height="14.2" rx="1.3" fill="#fbfbfb" stroke="#5f9bd3" stroke-width="1"/><rect x="2" y="13" width="10" height="1.6" fill="#5f9bd3"/><path d="M4.4 3.4H11M4.4 5.6H11M4.4 7.8H11M4.4 10H11M4.4 12H11" stroke="#c9c9c9" stroke-width="0.7"/><path d="M0.2 3H3M0.2 5.4H3M0.2 7.8H3M0.2 10.2H3M0.2 12.4H3" stroke="#4a4a4a" stroke-width="0.9"/></svg><svg style="left:1311px;top:206.3px" width="13.4" height="13.4" viewBox="0 0 13.4 13.4" ><circle cx="6.7" cy="6.7" r="6.3" fill="#fdfdfd" stroke="#c6c6c6" stroke-width="0.9"/><path d="M3 4.2 H10.4 V8 H8.6" fill="none" stroke="#8a8a8a" stroke-width="1.2" stroke-linejoin="round"/><path d="M3 4.2 V8 H5" fill="none" stroke="#8a8a8a" stroke-width="1.2"/><path d="M8.8 6 L5.6 8.4 L8.8 10.8 Z" fill="#8a8a8a"/></svg><svg style="left:1341.6px;top:205.4px" width="12.4" height="15.2" viewBox="0 0 12.4 15.2" ><defs><linearGradient id="gy" x1="0" y1="0" x2="0" y2="1"><stop offset="0" stop-color="#e9c96a"/><stop offset="1" stop-color="#fbeb9c"/></linearGradient></defs><rect x="0.6" y="2" width="11.2" height="12.6" rx="0.8" fill="url(#gy)" stroke="#dcc27e" stroke-width="0.6"/><path d="M3 2.6L5.6 4.6" stroke="#555" stroke-width="0.9"/><circle cx="3" cy="2.2" r="2" fill="#e5303a"/></svg><svg style="left:1370.8px;top:206px" width="14" height="14" viewBox="0 0 14 14" ><g transform="translate(6.9,7) rotate(45) scale(0.92)"><path d="M3 -2.4 V4.2 A3 3 0 0 1 -3 4.2 V-5 A2.2 2.2 0 0 1 1.4 -5 V3.6 A1.4 1.4 0 0 1 -1.4 3.6 V-2.6" fill="none" stroke="#4a4a4a" stroke-width="0.85" stroke-linecap="round"/></g></svg>
<div id="rows">
<div class="row" style="top:1.0px"><div class="num"></div><div class="c" style="left:30.4px">19.08.2024</div><div class="c" style="left:105.3px">LS-2508191</div><div class="c" style="left:190.0px">Weinbestellung März</div><svg style="left:391.29999999999995px;top:2.8px" width="11" height="12.4" viewBox="0 0 11 12.4" ><circle cx="5.5" cy="3.3" r="3.2" fill="#d2d2d2"/><path d="M0.1 12.3 C0.1 9 2.2 6.9 5.5 6.9 C8.8 6.9 10.9 9 10.9 12.3 Z" fill="#d2d2d2"/></svg><div class="c" style="left:407.7px;letter-spacing:0.09px">Ingird Schlüssel, Restaur...</div><div class="sq c-green" style="left:616.9px;top:4.3px"></div><div class="c grey" style="left:632.2px">Geliefert</div><div class="c" style="left:745.6px">CHF</div><div class="c r" style="left:795.7px;width:79.6px">714.05</div></div>
<div class="row alt" style="top:23.5px"><div class="num"></div><div class="c" style="left:30.4px">02.07.2023</div><div class="c" style="left:105.3px">RE-2308145</div><div class="c" style="left:190.0px">Weinbestellung Juli</div><svg style="left:391.29999999999995px;top:2.8px" width="11" height="12.4" viewBox="0 0 11 12.4" ><circle cx="5.5" cy="3.3" r="3.2" fill="#d2d2d2"/><path d="M0.1 12.3 C0.1 9 2.2 6.9 5.5 6.9 C8.8 6.9 10.9 9 10.9 12.3 Z" fill="#d2d2d2"/></svg><div class="c" style="left:407.7px;letter-spacing:0.09px">Fritz Hauser AG</div><div class="c grey" style="left:541.0px">01.08.2023</div><div class="sq c-green" style="left:616.9px;top:4.3px"></div><div class="c grey" style="left:632.2px">Bezahlt</div><div class="c" style="left:745.6px">CHF</div><div class="c r" style="left:795.7px;width:79.6px">2 924.05</div><div class="c r" style="left:880.0px;width:79.4px">0.00</div><svg style="left:975.3px;top:5.5px" width="10" height="9" viewBox="0 0 10 9" ><path d="M7.4 1.1 H2.2 C1.3 1.1 0.6 1.8 0.6 2.7 V6.7 C0.6 7.6 1.3 8.3 2.2 8.3 H6.4 C7.3 8.3 8 7.6 8 6.7 V5.6" fill="none" stroke="#2a2a2a" stroke-width="1"/><path d="M2.6 3.9 L4.4 5.7 L9.2 1" fill="none" stroke="#151515" stroke-width="1.7"/></svg></div>
<div class="row" style="top:46.0px"><div class="num"></div><div class="c" style="left:30.4px">20.05.2023</div><div class="c" style="left:105.3px">RE-2308144</div><div class="c" style="left:190.0px">Weinbestellung Mai</div><svg style="left:391.29999999999995px;top:2.8px" width="11" height="12.4" viewBox="0 0 11 12.4" ><circle cx="5.5" cy="3.3" r="3.2" fill="#d2d2d2"/><path d="M0.1 12.3 C0.1 9 2.2 6.9 5.5 6.9 C8.8 6.9 10.9 9 10.9 12.3 Z" fill="#d2d2d2"/></svg><div class="c" style="left:407.7px;letter-spacing:0.09px">Fritz Hauser AG</div><div class="c grey" style="left:541.0px">19.06.2023</div><div class="sq c-green" style="left:616.9px;top:4.3px"></div><div class="c grey" style="left:632.2px">Bezahlt</div><div class="c" style="left:745.6px">CHF</div><div class="c r" style="left:795.7px;width:79.6px">2 924.05</div><div class="c r" style="left:880.0px;width:79.4px">0.00</div><svg style="left:975.3px;top:5.5px" width="10" height="9" viewBox="0 0 10 9" ><path d="M7.4 1.1 H2.2 C1.3 1.1 0.6 1.8 0.6 2.7 V6.7 C0.6 7.6 1.3 8.3 2.2 8.3 H6.4 C7.3 8.3 8 7.6 8 6.7 V5.6" fill="none" stroke="#2a2a2a" stroke-width="1"/><path d="M2.6 3.9 L4.4 5.7 L9.2 1" fill="none" stroke="#151515" stroke-width="1.7"/></svg></div>
<div class="row alt" style="top:68.5px"><div class="num"></div><div class="c" style="left:30.4px">18.04.2023</div><div class="c" style="left:105.3px">RE-2308143</div><div class="c" style="left:190.0px">Weinbestellung April</div><svg style="left:391.29999999999995px;top:2.8px" width="11" height="12.4" viewBox="0 0 11 12.4" ><circle cx="5.5" cy="3.3" r="3.2" fill="#d2d2d2"/><path d="M0.1 12.3 C0.1 9 2.2 6.9 5.5 6.9 C8.8 6.9 10.9 9 10.9 12.3 Z" fill="#d2d2d2"/></svg><div class="c" style="left:407.7px;letter-spacing:0.09px">Fritz Hauser AG</div><div class="c grey" style="left:541.0px">18.05.2023</div><div class="sq c-green" style="left:616.9px;top:4.3px"></div><div class="c grey" style="left:632.2px">Bezahlt</div><div class="c" style="left:745.6px">CHF</div><div class="c r" style="left:795.7px;width:79.6px">2 140.22</div><div class="c r" style="left:880.0px;width:79.4px">0.00</div><svg style="left:975.3px;top:5.5px" width="10" height="9" viewBox="0 0 10 9" ><path d="M7.4 1.1 H2.2 C1.3 1.1 0.6 1.8 0.6 2.7 V6.7 C0.6 7.6 1.3 8.3 2.2 8.3 H6.4 C7.3 8.3 8 7.6 8 6.7 V5.6" fill="none" stroke="#2a2a2a" stroke-width="1"/><path d="M2.6 3.9 L4.4 5.7 L9.2 1" fill="none" stroke="#151515" stroke-width="1.7"/></svg></div>
<div class="row" style="top:91.0px"><div class="num"></div><div class="c" style="left:30.4px">14.04.2023</div><div class="c" style="left:105.3px">RE-2308142</div><div class="c" style="left:190.0px">Weinbestellung April</div><svg style="left:391.29999999999995px;top:2.8px" width="11" height="12.4" viewBox="0 0 11 12.4" ><circle cx="5.5" cy="3.3" r="3.2" fill="#d2d2d2"/><path d="M0.1 12.3 C0.1 9 2.2 6.9 5.5 6.9 C8.8 6.9 10.9 9 10.9 12.3 Z" fill="#d2d2d2"/></svg><div class="c" style="left:407.7px;letter-spacing:0.09px">Ingird Schlüssel, Restaur...</div><div class="c grey" style="left:541.0px">14.05.2023</div><div class="sq c-green" style="left:616.9px;top:4.3px"></div><div class="c grey" style="left:632.2px">Bezahlt</div><div class="c" style="left:745.6px">CHF</div><div class="c r" style="left:795.7px;width:79.6px">1 455.70</div><div class="c r" style="left:880.0px;width:79.4px">0.00</div><svg style="left:975.3px;top:5.5px" width="10" height="9" viewBox="0 0 10 9" ><path d="M7.4 1.1 H2.2 C1.3 1.1 0.6 1.8 0.6 2.7 V6.7 C0.6 7.6 1.3 8.3 2.2 8.3 H6.4 C7.3 8.3 8 7.6 8 6.7 V5.6" fill="none" stroke="#2a2a2a" stroke-width="1"/><path d="M2.6 3.9 L4.4 5.7 L9.2 1" fill="none" stroke="#151515" stroke-width="1.7"/></svg></div>
<div class="row alt" style="top:113.5px"><div class="num"></div><div class="c" style="left:30.4px">14.05.2023</div><div class="c" style="left:105.3px">RE-2308141</div><div class="c" style="left:190.0px">Einkauf Wein Laden</div><svg style="left:391.29999999999995px;top:2.8px" width="11" height="12.4" viewBox="0 0 11 12.4" ><circle cx="5.5" cy="3.3" r="3.2" fill="#d2d2d2"/><path d="M0.1 12.3 C0.1 9 2.2 6.9 5.5 6.9 C8.8 6.9 10.9 9 10.9 12.3 Z" fill="#d2d2d2"/></svg><div class="c" style="left:407.7px">Agnes Helbner, Elektro H...</div><div class="c grey" style="left:541.0px">13.06.2023</div><div class="sq c-green" style="left:616.9px;top:4.3px"></div><div class="c grey" style="left:632.2px">Bezahlt</div><div class="c" style="left:745.6px">CHF</div><div class="c r" style="left:795.7px;width:79.6px">73.45</div><div class="c r" style="left:880.0px;width:79.4px">0.00</div><svg style="left:975.3px;top:5.5px" width="10" height="9" viewBox="0 0 10 9" ><path d="M7.4 1.1 H2.2 C1.3 1.1 0.6 1.8 0.6 2.7 V6.7 C0.6 7.6 1.3 8.3 2.2 8.3 H6.4 C7.3 8.3 8 7.6 8 6.7 V5.6" fill="none" stroke="#2a2a2a" stroke-width="1"/><path d="M2.6 3.9 L4.4 5.7 L9.2 1" fill="none" stroke="#151515" stroke-width="1.7"/></svg></div>
<div class="row" style="top:136.0px"><div class="num"></div><div class="c" style="left:30.4px">10.03.2023</div><div class="c" style="left:105.3px">RE-230810225</div><div class="c" style="left:190.0px">Weinbestellung März</div><svg style="left:391.29999999999995px;top:2.8px" width="11" height="12.4" viewBox="0 0 11 12.4" ><circle cx="5.5" cy="3.3" r="3.2" fill="#d2d2d2"/><path d="M0.1 12.3 C0.1 9 2.2 6.9 5.5 6.9 C8.8 6.9 10.9 9 10.9 12.3 Z" fill="#d2d2d2"/></svg><div class="c" style="left:407.7px;letter-spacing:0.09px">Ingird Schlüssel, Restaur...</div><div class="c grey" style="left:541.0px">09.04.2023</div><div class="sq c-green" style="left:616.9px;top:4.3px"></div><div class="c grey" style="left:632.2px">Bezahlt</div><div class="c" style="left:745.6px">CHF</div><div class="c r" style="left:795.7px;width:79.6px">714.05</div><div class="c r" style="left:880.0px;width:79.4px">0.00</div><svg style="left:975.3px;top:5.5px" width="10" height="9" viewBox="0 0 10 9" ><path d="M7.4 1.1 H2.2 C1.3 1.1 0.6 1.8 0.6 2.7 V6.7 C0.6 7.6 1.3 8.3 2.2 8.3 H6.4 C7.3 8.3 8 7.6 8 6.7 V5.6" fill="none" stroke="#2a2a2a" stroke-width="1"/><path d="M2.6 3.9 L4.4 5.7 L9.2 1" fill="none" stroke="#151515" stroke-width="1.7"/></svg></div>
<div class="row alt" style="top:158.5px"><div class="num"></div><div class="c" style="left:30.4px">10.03.2023</div><div class="c" style="left:105.3px">OF-2308101</div><div class="c" style="left:190.0px">Weinbestellung März</div><svg style="left:391.29999999999995px;top:2.8px" width="11" height="12.4" viewBox="0 0 11 12.4" ><circle cx="5.5" cy="3.3" r="3.2" fill="#d2d2d2"/><path d="M0.1 12.3 C0.1 9 2.2 6.9 5.5 6.9 C8.8 6.9 10.9 9 10.9 12.3 Z" fill="#d2d2d2"/></svg><div class="c" style="left:407.7px;letter-spacing:0.09px">Ingird Schlüssel, Restaur...</div><div class="c grey" style="left:541.0px">09.04.2023</div><div class="sq c-green" style="left:616.9px;top:4.3px"></div><div class="c grey" style="left:632.2px">Akzeptiert</div><div class="c" style="left:745.6px">CHF</div><div class="c r" style="left:795.7px;width:79.6px">714.05</div></div>
<div class="row" style="top:181.0px"><div class="num"></div><div class="c" style="left:30.4px">19.05.2022</div><div class="c" style="left:105.3px">RE-2205191</div><div class="c" style="left:190.0px">Weinbestellung Mai</div><svg style="left:391.29999999999995px;top:2.8px" width="11" height="12.4" viewBox="0 0 11 12.4" ><circle cx="5.5" cy="3.3" r="3.2" fill="#d2d2d2"/><path d="M0.1 12.3 C0.1 9 2.2 6.9 5.5 6.9 C8.8 6.9 10.9 9 10.9 12.3 Z" fill="#d2d2d2"/></svg><div class="c" style="left:407.7px;letter-spacing:0.09px">Fritz Hauser AG</div><div class="c red" style="left:541.0px">18.06.2022</div><div class="sq c-gray" style="left:616.9px;top:4.3px"></div><div class="c red" style="left:632.2px">Entwurf</div><div class="c" style="left:745.6px">CHF</div><div class="c r" style="left:795.7px;width:79.6px">2 924.05</div></div>
<div class="row alt" style="top:203.5px"><div class="num"></div><div class="c" style="left:30.4px">22.05.2020</div><div class="c" style="left:105.3px">RE-2005025</div><div class="c" style="left:190.0px">Weinbestellung Mai</div><svg style="left:391.29999999999995px;top:2.8px" width="11" height="12.4" viewBox="0 0 11 12.4" ><circle cx="5.5" cy="3.3" r="3.2" fill="#d2d2d2"/><path d="M0.1 12.3 C0.1 9 2.2 6.9 5.5 6.9 C8.8 6.9 10.9 9 10.9 12.3 Z" fill="#d2d2d2"/></svg><div class="c" style="left:407.7px;letter-spacing:0.09px">Fritz Hauser AG</div><div class="c grey" style="left:541.0px">21.06.2020</div><div class="sq c-green" style="left:616.9px;top:4.3px"></div><div class="c grey" style="left:632.2px">Bezahlt</div><div class="c" style="left:745.6px">CHF</div><div class="c r" style="left:795.7px;width:79.6px">2 924.05</div><div class="c r" style="left:880.0px;width:79.4px">0.00</div><svg style="left:975.3px;top:5.5px" width="10" height="9" viewBox="0 0 10 9" ><path d="M7.4 1.1 H2.2 C1.3 1.1 0.6 1.8 0.6 2.7 V6.7 C0.6 7.6 1.3 8.3 2.2 8.3 H6.4 C7.3 8.3 8 7.6 8 6.7 V5.6" fill="none" stroke="#2a2a2a" stroke-width="1"/><path d="M2.6 3.9 L4.4 5.7 L9.2 1" fill="none" stroke="#151515" stroke-width="1.7"/></svg></div>
<div class="row" style="top:226.0px"><div class="num"></div><div class="c" style="left:30.4px">30.04.2020</div><div class="c" style="left:105.3px">RE-2005024</div><div class="c" style="left:190.0px">Weinbestellung April</div><svg style="left:391.29999999999995px;top:2.8px" width="11" height="12.4" viewBox="0 0 11 12.4" ><circle cx="5.5" cy="3.3" r="3.2" fill="#d2d2d2"/><path d="M0.1 12.3 C0.1 9 2.2 6.9 5.5 6.9 C8.8 6.9 10.9 9 10.9 12.3 Z" fill="#d2d2d2"/></svg><div class="c" style="left:407.7px;letter-spacing:0.09px">Fritz Hauser AG</div><div class="c grey" style="left:541.0px">30.05.2020</div><div class="sq c-green" style="left:616.9px;top:4.3px"></div><div class="c grey" style="left:632.2px">Bezahlt</div><div class="c" style="left:745.6px">CHF</div><div class="c r" style="left:795.7px;width:79.6px">2 140.22</div><div class="c r" style="left:880.0px;width:79.4px">0.00</div><svg style="left:975.3px;top:5.5px" width="10" height="9" viewBox="0 0 10 9" ><path d="M7.4 1.1 H2.2 C1.3 1.1 0.6 1.8 0.6 2.7 V6.7 C0.6 7.6 1.3 8.3 2.2 8.3 H6.4 C7.3 8.3 8 7.6 8 6.7 V5.6" fill="none" stroke="#2a2a2a" stroke-width="1"/><path d="M2.6 3.9 L4.4 5.7 L9.2 1" fill="none" stroke="#151515" stroke-width="1.7"/></svg></div>
<div class="row alt" style="top:248.5px"><div class="num"></div><div class="c" style="left:30.4px">12.04.2020</div><div class="c" style="left:105.3px">RE-2005023</div><div class="c" style="left:190.0px">Weinbestellung April</div><svg style="left:391.29999999999995px;top:2.8px" width="11" height="12.4" viewBox="0 0 11 12.4" ><circle cx="5.5" cy="3.3" r="3.2" fill="#d2d2d2"/><path d="M0.1 12.3 C0.1 9 2.2 6.9 5.5 6.9 C8.8 6.9 10.9 9 10.9 12.3 Z" fill="#d2d2d2"/></svg><div class="c" style="left:407.7px;letter-spacing:0.09px">Ingird Schlüssel, Restaur...</div><div class="c grey" style="left:541.0px">12.05.2020</div><div class="sq c-green" style="left:616.9px;top:4.3px"></div><div class="c grey" style="left:632.2px">Bezahlt</div><div class="c" style="left:745.6px">CHF</div><div class="c r" style="left:795.7px;width:79.6px">1 455.70</div><div class="c r" style="left:880.0px;width:79.4px">0.00</div><svg style="left:975.3px;top:5.5px" width="10" height="9" viewBox="0 0 10 9" ><path d="M7.4 1.1 H2.2 C1.3 1.1 0.6 1.8 0.6 2.7 V6.7 C0.6 7.6 1.3 8.3 2.2 8.3 H6.4 C7.3 8.3 8 7.6 8 6.7 V5.6" fill="none" stroke="#2a2a2a" stroke-width="1"/><path d="M2.6 3.9 L4.4 5.7 L9.2 1" fill="none" stroke="#151515" stroke-width="1.7"/></svg></div>
<div class="row" style="top:271.0px"><div class="num"></div><div class="c" style="left:30.4px">01.04.2020</div><div class="c" style="left:105.3px">RE-2005022</div><div class="c" style="left:190.0px">Weinbestellung März</div><svg style="left:391.29999999999995px;top:2.8px" width="11" height="12.4" viewBox="0 0 11 12.4" ><circle cx="5.5" cy="3.3" r="3.2" fill="#d2d2d2"/><path d="M0.1 12.3 C0.1 9 2.2 6.9 5.5 6.9 C8.8 6.9 10.9 9 10.9 12.3 Z" fill="#d2d2d2"/></svg><div class="c" style="left:407.7px;letter-spacing:0.09px">Ingird Schlüssel, Restaur...</div><div class="c grey" style="left:541.0px">01.05.2020</div><div class="sq c-green" style="left:616.9px;top:4.3px"></div><div class="c grey" style="left:632.2px">Bezahlt</div><div class="c" style="left:745.6px">CHF</div><div class="c r" style="left:795.7px;width:79.6px">714.05</div><div class="c r" style="left:880.0px;width:79.4px">0.00</div><svg style="left:975.3px;top:5.5px" width="10" height="9" viewBox="0 0 10 9" ><path d="M7.4 1.1 H2.2 C1.3 1.1 0.6 1.8 0.6 2.7 V6.7 C0.6 7.6 1.3 8.3 2.2 8.3 H6.4 C7.3 8.3 8 7.6 8 6.7 V5.6" fill="none" stroke="#2a2a2a" stroke-width="1"/><path d="M2.6 3.9 L4.4 5.7 L9.2 1" fill="none" stroke="#151515" stroke-width="1.7"/></svg></div>
<div class="row alt" style="top:293.5px"><div class="num"></div><div class="c" style="left:30.4px">02.05.2020</div><div class="c" style="left:105.3px">RE-2005021</div><div class="c" style="left:190.0px">Einkauf Wein Laden</div><svg style="left:391.29999999999995px;top:2.8px" width="11" height="12.4" viewBox="0 0 11 12.4" ><circle cx="5.5" cy="3.3" r="3.2" fill="#d2d2d2"/><path d="M0.1 12.3 C0.1 9 2.2 6.9 5.5 6.9 C8.8 6.9 10.9 9 10.9 12.3 Z" fill="#d2d2d2"/></svg><div class="c" style="left:407.7px">Agnes Helbner, Elektro H...</div><div class="c grey" style="left:541.0px">01.06.2020</div><div class="sq c-green" style="left:616.9px;top:4.3px"></div><div class="c grey" style="left:632.2px">Bezahlt</div><div class="c" style="left:745.6px">CHF</div><div class="c r" style="left:795.7px;width:79.6px">73.45</div><div class="c r" style="left:880.0px;width:79.4px">0.00</div><svg style="left:975.3px;top:5.5px" width="10" height="9" viewBox="0 0 10 9" ><path d="M7.4 1.1 H2.2 C1.3 1.1 0.6 1.8 0.6 2.7 V6.7 C0.6 7.6 1.3 8.3 2.2 8.3 H6.4 C7.3 8.3 8 7.6 8 6.7 V5.6" fill="none" stroke="#2a2a2a" stroke-width="1"/><path d="M2.6 3.9 L4.4 5.7 L9.2 1" fill="none" stroke="#151515" stroke-width="1.7"/></svg></div>
<div class="row" style="top:316.0px"><div class="num"></div><div class="c" style="left:30.4px">02.05.2020</div><div class="c" style="left:105.3px">OF-2005023</div><div class="c" style="left:190.0px">Einkauf Wein Laden</div><svg style="left:391.29999999999995px;top:2.8px" width="11" height="12.4" viewBox="0 0 11 12.4" ><circle cx="5.5" cy="3.3" r="3.2" fill="#d2d2d2"/><path d="M0.1 12.3 C0.1 9 2.2 6.9 5.5 6.9 C8.8 6.9 10.9 9 10.9 12.3 Z" fill="#d2d2d2"/></svg><div class="c" style="left:407.7px">Agnes Helbner, Elektro H...</div><div class="c grey" style="left:541.0px">01.06.2020</div><div class="sq c-green" style="left:616.9px;top:4.3px"></div><div class="c grey" style="left:632.2px">Akzeptiert</div><div class="c" style="left:745.6px">CHF</div><div class="c r" style="left:795.7px;width:79.6px">73.45</div></div>
<div class="row alt" style="top:338.5px"><div class="num"></div><div class="c" style="left:30.4px">02.05.2020</div><div class="c" style="left:105.3px">OF-2005022</div><div class="c" style="left:190.0px">Weinbestellung Mai</div><svg style="left:391.29999999999995px;top:2.8px" width="11" height="12.4" viewBox="0 0 11 12.4" ><circle cx="5.5" cy="3.3" r="3.2" fill="#d2d2d2"/><path d="M0.1 12.3 C0.1 9 2.2 6.9 5.5 6.9 C8.8 6.9 10.9 9 10.9 12.3 Z" fill="#d2d2d2"/></svg><div class="c" style="left:407.7px;letter-spacing:0.09px">Fritz Hauser AG</div><div class="c red" style="left:541.0px">01.06.2020</div><div class="sq c-gray" style="left:616.9px;top:4.3px"></div><div class="c red" style="left:632.2px">Entwurf</div><div class="c" style="left:745.6px">CHF</div><div class="c r" style="left:795.7px;width:79.6px">2 924.05</div></div>
<div class="row" style="top:361.0px"><div class="num"></div><div class="c" style="left:30.4px">02.04.2020</div><div class="c" style="left:105.3px">OF-2005021</div><div class="c" style="left:190.0px">Weinbestellung April</div><svg style="left:391.29999999999995px;top:2.8px" width="11" height="12.4" viewBox="0 0 11 12.4" ><circle cx="5.5" cy="3.3" r="3.2" fill="#d2d2d2"/><path d="M0.1 12.3 C0.1 9 2.2 6.9 5.5 6.9 C8.8 6.9 10.9 9 10.9 12.3 Z" fill="#d2d2d2"/></svg><div class="c" style="left:407.7px;letter-spacing:0.09px">Fritz Hauser AG</div><div class="c red" style="left:541.0px">02.05.2020</div><div class="sq c-gray" style="left:616.9px;top:4.3px"></div><div class="c red" style="left:632.2px">Entwurf</div><div class="c" style="left:745.6px">CHF</div><div class="c r" style="left:795.7px;width:79.6px">2 140.22</div></div>
<div class="row alt" style="top:383.5px"><div class="num"></div><div class="c" style="left:30.4px">29.04.2020</div><div class="c" style="left:105.3px">OF-2004292</div><div class="c" style="left:190.0px">Weinbestellung April</div><svg style="left:391.29999999999995px;top:2.8px" width="11" height="12.4" viewBox="0 0 11 12.4" ><circle cx="5.5" cy="3.3" r="3.2" fill="#d2d2d2"/><path d="M0.1 12.3 C0.1 9 2.2 6.9 5.5 6.9 C8.8 6.9 10.9 9 10.9 12.3 Z" fill="#d2d2d2"/></svg><div class="c" style="left:407.7px;letter-spacing:0.09px">Ingird Schlüssel, Restaur...</div><div class="c red" style="left:541.0px">29.05.2020</div><div class="sq c-gray" style="left:616.9px;top:4.3px"></div><div class="c red" style="left:632.2px">Entwurf</div><div class="c" style="left:745.6px">CHF</div><div class="c r" style="left:795.7px;width:79.6px">507.90</div></div>
<div class="row" style="top:406.0px"><div class="num"></div><div class="c" style="left:30.4px">14.01.2020</div><div class="c" style="left:105.3px">RE-2001141</div><div class="c" style="left:190.0px">Lieferung Januar</div><svg style="left:391.29999999999995px;top:2.8px" width="11" height="12.4" viewBox="0 0 11 12.4" ><circle cx="5.5" cy="3.3" r="3.2" fill="#d2d2d2"/><path d="M0.1 12.3 C0.1 9 2.2 6.9 5.5 6.9 C8.8 6.9 10.9 9 10.9 12.3 Z" fill="#d2d2d2"/></svg><div class="c" style="left:407.7px;letter-spacing:0.09px">Ingird Schlüssel, Restaur...</div><div class="c grey" style="left:541.0px">13.02.2020</div><div class="sq c-green" style="left:616.9px;top:4.3px"></div><div class="c grey" style="left:632.2px">Bezahlt</div><div class="c" style="left:745.6px">CHF</div><div class="c r" style="left:795.7px;width:79.6px">67.86</div><div class="c r" style="left:880.0px;width:79.4px">67.86</div><svg style="left:975.3px;top:5.5px" width="10" height="9" viewBox="0 0 10 9" ><path d="M7.4 1.1 H2.2 C1.3 1.1 0.6 1.8 0.6 2.7 V6.7 C0.6 7.6 1.3 8.3 2.2 8.3 H6.4 C7.3 8.3 8 7.6 8 6.7 V5.6" fill="none" stroke="#2a2a2a" stroke-width="1"/><path d="M2.6 3.9 L4.4 5.7 L9.2 1" fill="none" stroke="#151515" stroke-width="1.7"/></svg></div>
<div class="row alt" style="top:428.5px"><div class="num"></div><div class="c" style="left:30.4px">09.01.2020</div><div class="c" style="left:105.3px">LS-2001091</div><div class="c" style="left:190.0px">Lieferung Januar</div><svg style="left:391.29999999999995px;top:2.8px" width="11" height="12.4" viewBox="0 0 11 12.4" ><circle cx="5.5" cy="3.3" r="3.2" fill="#d2d2d2"/><path d="M0.1 12.3 C0.1 9 2.2 6.9 5.5 6.9 C8.8 6.9 10.9 9 10.9 12.3 Z" fill="#d2d2d2"/></svg><div class="c" style="left:407.7px;letter-spacing:0.09px">Ingird Schlüssel, Restaur...</div><div class="sq c-yellow" style="left:616.9px;top:4.3px"></div><div class="c grey" style="left:632.2px">Retour</div><div class="c" style="left:745.6px">CHF</div><div class="c r" style="left:795.7px;width:79.6px">67.86</div></div>
</div><div id="vsb"><i></i></div>
<div class="foot" style="left:309px;width:1100px"></div><svg style="left:316px;top:677px" width="10.4" height="11.4" viewBox="0 0 10.4 11.4" ><rect x="0.3" y="0.2" width="2.4" height="11" fill="#bfc5cd"/><path d="M10.2 0.2 V11.2 L3.4 5.7 Z" fill="#c3c8d0"/></svg><svg style="left:339.5px;top:677px" width="6.6" height="11.4" viewBox="0 0 6.6 11.4" ><path d="M6.4 0.2 V11.2 L0.2 5.7 Z" fill="#c3c8d0"/></svg><div class="vsep" style="left:356.2px;top:676px"></div><div class="a ft" style="left:363.4px;">Seite</div><div class="fld" style="left:393.2px;top:673px;width:28.4px;height:19.4px"></div><div class="a" style="left:397.3px;top:677.4px;font-size:10px">1</div><div class="a ft" style="left:429.2px;">von 1</div><div class="vsep" style="left:460.3px;top:676px"></div><svg style="left:471px;top:677px" width="6.6" height="11.4" viewBox="0 0 6.6 11.4" ><path d="M0.2 0.2 V11.2 L6.4 5.7 Z" fill="#c3c8d0"/></svg><svg style="left:491.6px;top:677px" width="10.4" height="11.4" viewBox="0 0 10.4 11.4" ><rect x="7.7" y="0.2" width="2.4" height="11" fill="#bfc5cd"/><path d="M0.2 0.2 V11.2 L7 5.7 Z" fill="#c3c8d0"/></svg><div class="vsep" style="left:509.2px;top:676px"></div><svg style="left:516.3px;top:675.8px" width="14" height="14" viewBox="0 0 14 14" ><defs><linearGradient id="gr" x1="0" y1="0" x2="0" y2="1"><stop offset="0" stop-color="#7dbcf0"/><stop offset="1" stop-color="#2f7fd0"/></linearGradient></defs><path d="M1.2 6.4 C1.4 3 4 1 7 1 C8.6 1 10 1.6 11 2.6 L12.6 1 V5.8 H7.8 L9.4 4.2 C8.8 3.6 8 3.2 7 3.2 C5.2 3.2 3.8 4.4 3.4 6.4 Z" fill="url(#gr)" stroke="#2a6fb8" stroke-width="0.4"/><path d="M12.8 7.6 C12.6 11 10 13 7 13 C5.4 13 4 12.4 3 11.4 L1.4 13 V8.2 H6.2 L4.6 9.8 C5.2 10.4 6 10.8 7 10.8 C8.8 10.8 10.2 9.6 10.6 7.6 Z" fill="url(#gr)" stroke="#2a6fb8" stroke-width="0.4"/></svg><div class="vsep" style="left:1262px;top:676px"></div><div class="a ft" style="left:1269.8px;">Einträge 1 - 20 von 20</div><div class="a ft" style="left:1385.2px;">#</div><svg style="left:1395.8px;top:682px" width="5.6" height="3.1" viewBox="0 0 5.6 3.1"><path d="M0 0H5.6L2.8 3.1Z" fill="#111"/></svg>
</div></div>
</div>
<div id="chrome">
  <div class="tl" style="left:18.7px;background:#ed6a5e"></div>
  <div class="tl" style="left:37.5px;background:#f5bf4f"></div>
  <div class="tl" style="left:56.3px;background:#61c554"></div>

  <div id="url"><div id="urltext">mariaweingenuss.cashctrl.com</div></div>
<svg style="left:95px;top:16.5px" width="10" height="15" viewBox="0 0 10 15" ><path d="M8.2 1.9 L1.8 7.4 L8.2 12.9" fill="none" stroke="#4a4a4c" stroke-width="1.5" stroke-linecap="round" stroke-linejoin="round"/></svg><svg style="left:128.7px;top:16.5px" width="10" height="15" viewBox="0 0 10 15" ><path d="M1.8 1.9 L8.2 7.4 L1.8 12.9" fill="none" stroke="#b9b7ba" stroke-width="1.5" stroke-linecap="round" stroke-linejoin="round"/></svg><svg style="left:1388.5px;top:17.5px" width="13" height="13" viewBox="0 0 13 13" ><path d="M6.5 0.5V12.5M0.5 6.5H12.5" stroke="#4a4a4c" stroke-width="1.2" fill="none" stroke-linecap="round"/></svg><svg style="left:429.5px;top:18px" width="13" height="14" viewBox="0 0 13 14" ><rect x="1.4" y="0.8" width="10" height="5.7" rx="1.4" fill="none" stroke="#77777a" stroke-width="1"/><path d="M1.2 9.4H11.4M1.2 12.4H8.4" stroke="#77777a" stroke-width="1" fill="none" stroke-linecap="round"/></svg><svg style="left:978.1px;top:17.5px" width="14" height="14" viewBox="0 0 14 14" ><path d="M9.1 3.1 A5.1 5.1 0 1 0 12.2 7.9" fill="none" stroke="#67676a" stroke-width="1.05" stroke-linecap="round"/><path d="M6.9 0.8L9.5 3.1L6.9 6" fill="none" stroke="#67676a" stroke-width="1.05" stroke-linecap="round" stroke-linejoin="round"/></svg>
</div>
</div>
</body>
</html>
